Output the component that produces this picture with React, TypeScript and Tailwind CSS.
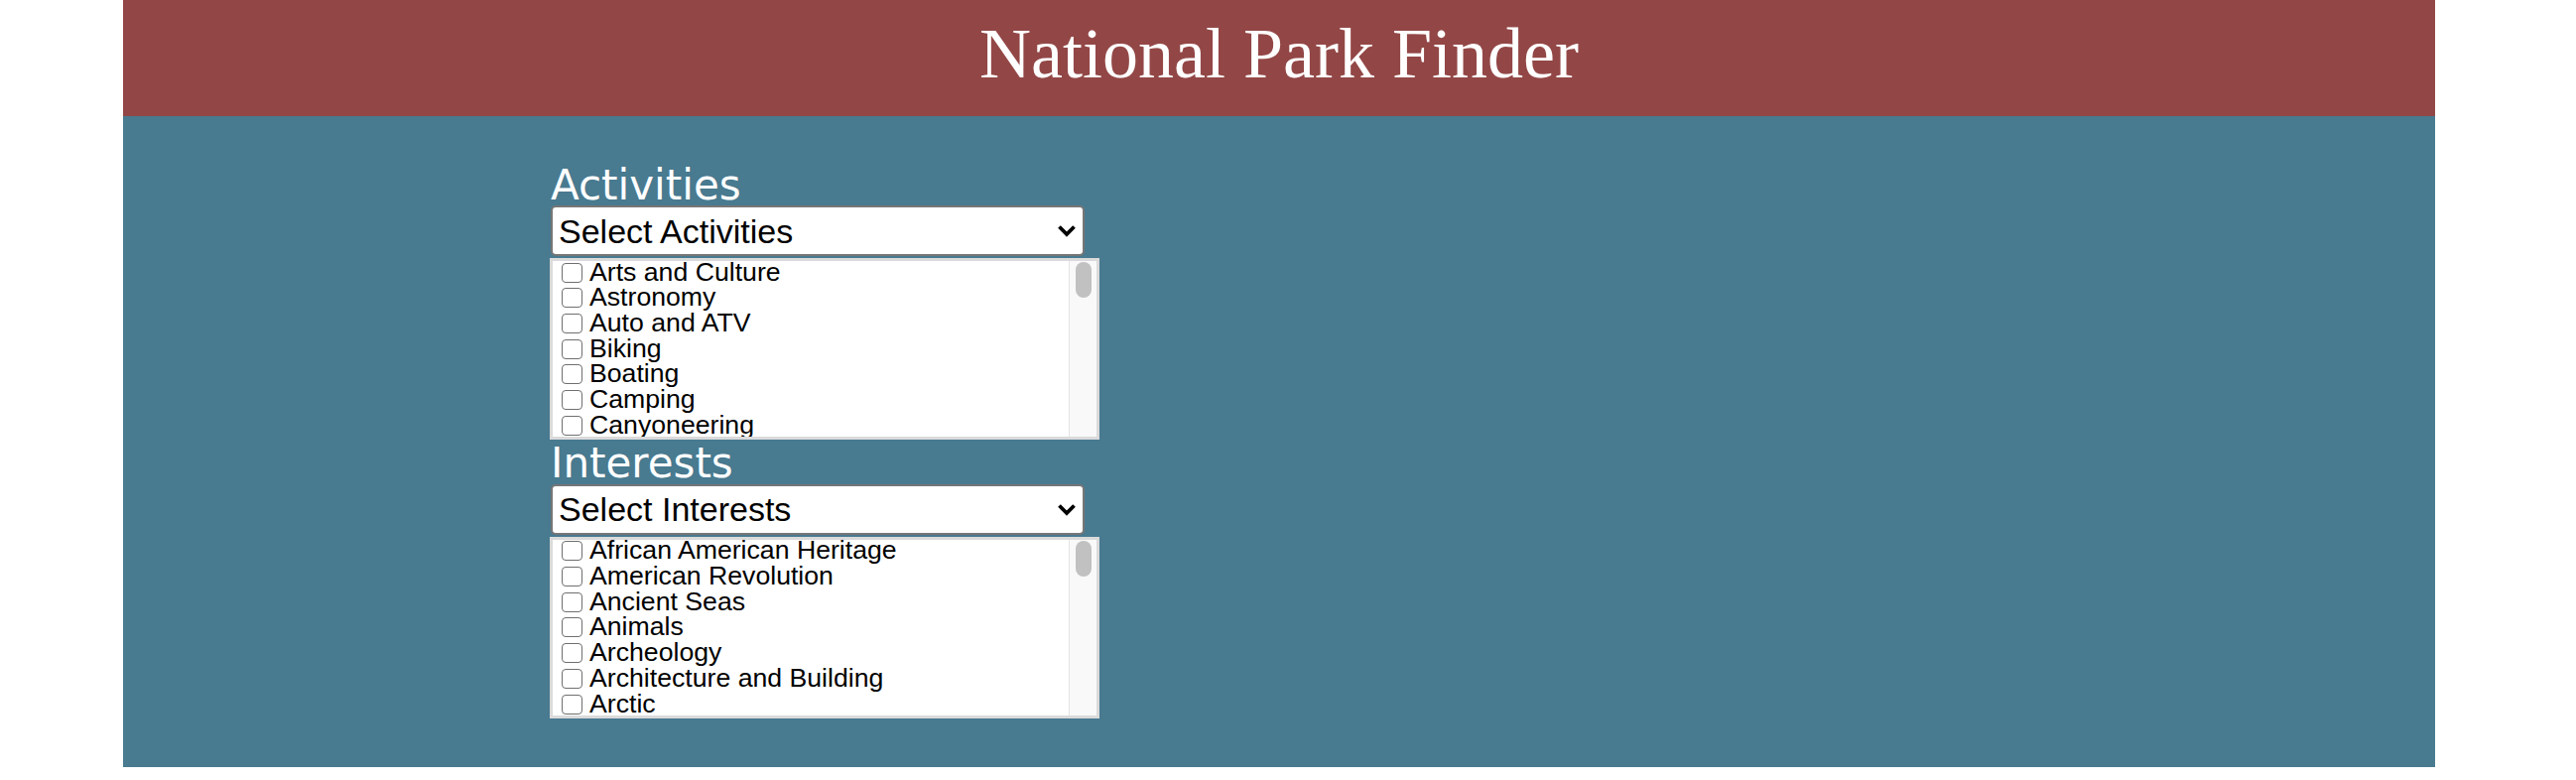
import React from "react";

const activities = [
  "Arts and Culture",
  "Astronomy",
  "Auto and ATV",
  "Biking",
  "Boating",
  "Camping",
  "Canyoneering",
  "Caving",
  "Climbing",
  "Compass and GPS",
];

const interests = [
  "African American Heritage",
  "American Revolution",
  "Ancient Seas",
  "Animals",
  "Archeology",
  "Architecture and Building",
  "Arctic",
  "Arts",
  "Asian American Heritage",
];

function Chevron() {
  return (
    <svg width="20" height="13" viewBox="0 0 20 13" className="shrink-0">
      <path d="M2.5 2.5 L10 10 L17.5 2.5" fill="none" stroke="#000" strokeWidth="3.8" strokeLinecap="butt" strokeLinejoin="miter" />
    </svg>
  );
}

function Section({ label, placeholder, items }: { label: string; placeholder: string; items: string[] }) {
  return (
    <div className="w-[554px]">
      <div className="h-[44.6px] pl-[1px] text-[42px] leading-[48.9px] text-white font-['DejaVu_Sans',sans-serif]">{label}</div>
      <div className="ml-[1px] flex h-[51px] w-[538px] items-center justify-between rounded-[5px] border-2 border-[#767676] bg-white pl-[6px] pr-[6px]">
        <span className="text-[34px] leading-[40px] text-black font-['Liberation_Sans',Arial,sans-serif]">{placeholder}</span>
        <Chevron />
      </div>
      <div className="mt-[2px] flex h-[183px] w-[554px] border-[3px] border-[#dadada] bg-white">
        <div className="flex-1 overflow-hidden pl-[9px]">
          <div className="-mt-[1.5px]">
            {items.map((it) => (
              <div key={it} className="flex items-start gap-[7px] text-[26.67px] leading-[25.72px] text-black font-['Liberation_Sans',Arial,sans-serif] whitespace-nowrap">
                <span className="mt-[3px] inline-block h-[20px] w-[21px] shrink-0 rounded-[4px] border-[1.6px] border-[#6f6f6f] bg-white" />
                <span>{it}</span>
              </div>
            ))}
          </div>
        </div>
        <div className="w-[28px] border-l border-[#e4e4e4] bg-[#f9f9f9] pl-[6px] pt-[1px]">
          <div className="h-[36px] w-[16px] rounded-full bg-[#c1c1c1]" />
        </div>
      </div>
    </div>
  );
}

export default function App() {
  return (
    <div className="min-h-[786px] w-full bg-white">
      <div className="ml-[124px] w-[2330px]">
        <header className="h-[117px] bg-[#924746] pt-[14px] text-center text-[72px] leading-[80px] text-white font-['Liberation_Serif',serif]">
          National Park Finder
        </header>
        <main className="bg-[#487a90] pb-[49px] pl-[430px] pt-[45.5px]">
          <Section label="Activities" placeholder="Select Activities" items={activities} />
          <Section label="Interests" placeholder="Select Interests" items={interests} />
        </main>
      </div>
    </div>
  );
}
